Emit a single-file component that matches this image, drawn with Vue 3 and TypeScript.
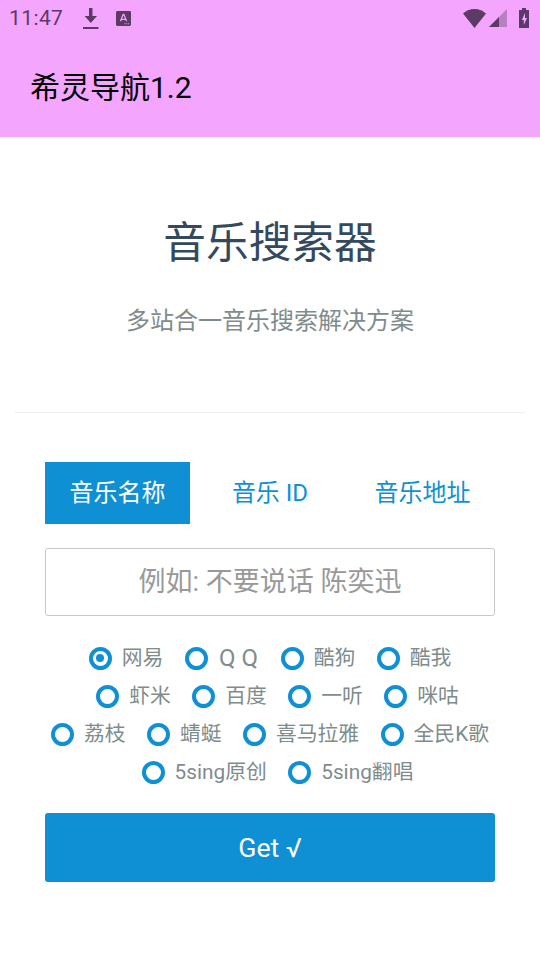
<script setup lang="ts">
const sources: { name: string; checked?: boolean; big?: boolean }[] = [
  { name: '网易', checked: true }, { name: 'Q Q', big: true }, { name: '酷狗' }, { name: '酷我' },
  { name: '虾米' }, { name: '百度' }, { name: '一听' }, { name: '咪咕' },
  { name: '荔枝' }, { name: '蜻蜓' }, { name: '喜马拉雅' }, { name: '全民K歌' },
  { name: '5sing原创' }, { name: '5sing翻唱' }
]
const rows = [sources.slice(0, 4), sources.slice(4, 8), sources.slice(8, 12), sources.slice(12)]
</script>

<template>
  <div class="page">
    <header class="appbar">
      <div class="status">
        <div class="status-left">
          <span class="time">11:47</span>
          <svg class="ic-dl" width="16" height="21" viewBox="0 0 16 21"><path d="M6 0h3.500v8H14l-6.200 7-6.200-7H6zM0 19h15.500v2H0z" fill="#5c3a66"/></svg>
          <svg class="ic-a" width="15" height="15" viewBox="0 0 16 16"><rect width="16" height="16" rx="1.500" fill="#5c3a66"/><path d="M4 11 7.200 3h1.600L12 11h-1.500L10 9.500H6L5.500 11zM6.500 8.200h3L8 4.600z" fill="#f4a6ff"/><path d="M9 13h1v1H9zM11 13h1v1h-1zM13 13h1v1h-1z" fill="#f4a6ff"/></svg>
        </div>
        <div class="status-right">
          <svg width="23" height="19" viewBox="0 0 23 19"><path d="M0 4.500C3 2 7 0 11.500 0S20 2 23 4.500L11.500 19z" fill="#5c3a66"/></svg>
          <svg class="ic-sig" width="18" height="18" viewBox="0 0 18 18"><path d="M0 18 18 0v18z" fill="#b57fc0"/><path d="M0 18 10 8v10z" fill="#5c3a66"/></svg>
          <svg class="ic-bat" width="10" height="20" viewBox="0 0 10 20"><path d="M3 0h4v2h3v18H0V2h3z" fill="#5c3a66"/><path d="M6 5 2.800 12h2v5L8 10H6z" fill="#f4a6ff"/></svg>
        </div>
      </div>
      <div class="title">希灵导航1.2</div>
    </header>

    <main class="content">
      <h1 class="heading">音乐搜索器</h1>
      <p class="sub">多站合一音乐搜索解决方案</p>
      <div class="rule"></div>

      <div class="form">
        <div class="tabs">
          <div class="tab active">音乐名称</div>
          <div class="tab">音乐 ID</div>
          <div class="tab">音乐地址</div>
        </div>
        <input class="field" type="text" placeholder="例如: 不要说话 陈奕迅" />
        <div class="radios">
          <div v-for="(row, i) in rows" :key="i" class="radio-row" :class="{ shifted: i % 2 === 1 }">
            <label v-for="s in row" :key="s.name" class="radio">
              <span class="dot" :class="{ on: s.checked }"></span>
              <span class="label" :class="{ big: s.big }">{{ s.name }}</span>
            </label>
          </div>
        </div>
        <button class="get" type="button">Get √</button>
      </div>
    </main>
  </div>
</template>

<style scoped>
.page {
  width: 540px;
  height: 960px;
  background: #fff;
  overflow: hidden;
  font-family: Roboto, "Noto Sans CJK SC", sans-serif;
}
.appbar {
  height: 137px;
  background: #f4a6ff;
  display: flex;
  flex-direction: column;
}
.status {
  height: 36px;
  display: flex;
  align-items: center;
  justify-content: space-between;
  padding: 0 11px 0 9px;
}
.status-left, .status-right { display: flex; align-items: center; }
.time { font-size: 21px; color: #5c3a66; letter-spacing: 0.4px; width: 74px; }
.ic-dl { margin-right: 17px; }
.ic-sig { margin-left: 3px; }
.ic-bat { margin-left: 12px; }
.title {
  margin-top: 33px;
  padding-left: 30px;
  font-size: 30px;
  line-height: 38px;
  color: #000;
}
.content { display: flex; flex-direction: column; align-items: center; }
.heading {
  margin: 76px 0 0;
  font-size: 42.67px;
  line-height: 60px;
  font-weight: 400;
  color: #34495e;
}
.sub {
  margin: 31px 0 0;
  font-size: 24px;
  line-height: 34px;
  color: #7f8c8d;
}
.rule {
  width: 510px;
  height: 1px;
  margin-top: 74px;
  background: #eeeeee;
}
.form { width: 450px; margin-top: 49px; }
.tabs { display: flex; justify-content: space-between; }
.tab {
  box-sizing: border-box;
  width: 145px;
  height: 62px;
  padding-bottom: 6px;
  display: flex;
  align-items: center;
  justify-content: center;
  font-size: 24px;
  color: #1090d4;
}
.tab.active { background: #1090d4; color: #fff; }
.field {
  display: block;
  box-sizing: border-box;
  width: 450px;
  height: 68px;
  margin-top: 24px;
  border: 1px solid #c8c8c8;
  border-radius: 3px;
  padding: 0 10px;
  outline: none;
  background: #fff;
  text-align: center;
  font-family: inherit;
  font-size: 27px;
  color: #333;
}
.field::placeholder { color: #999; opacity: 1; }
.radios {
  margin: 23px -10px 0;
  display: flex;
  flex-direction: column;
}
.radio-row { height: 38px; display: flex; justify-content: center; gap: 21.4px; }
.radio-row.shifted { padding-left: 15px; }
.radio { display: flex; align-items: center; gap: 10px; }
.dot {
  box-sizing: border-box;
  width: 23px;
  height: 23px;
  border: 4px solid #1090d4;
  border-radius: 50%;
  display: flex;
  align-items: center;
  justify-content: center;
}
.dot.on::after {
  content: "";
  width: 8px;
  height: 8px;
  border-radius: 50%;
  background: #1090d4;
}
.label { min-width: 41.6px; font-size: 20.8px; line-height: 38px; color: #7f8c8d; text-align: center; }
.label.big { font-size: 24px; }
.get {
  display: block;
  width: 450px;
  height: 69px;
  margin-top: 22px;
  border: 0;
  border-radius: 3px;
  background: #1090d4;
  color: #fff;
  font-family: inherit;
  font-size: 26.67px;
}
</style>
